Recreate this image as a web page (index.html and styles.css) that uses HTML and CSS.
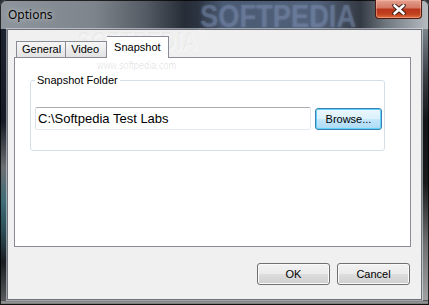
FILE: index.html
```html
<!DOCTYPE html>
<html lang="en">
<head>
  <meta charset="UTF-8">
  <title>Options</title>
  <link rel="stylesheet" href="styles.css">
</head>
<body>
  <div class="window">
    <div class="titlebar">
      <span class="title">Options</span>
      <div class="close-btn">
        <svg width="14" height="11" viewBox="0 0 14 11">
          <path d="M2.5 1.5 L11.5 9.5 M11.5 1.5 L2.5 9.5" stroke="#3a1a14" stroke-width="4.4" stroke-linecap="round"/>
          <path d="M2.5 1.5 L11.5 9.5 M11.5 1.5 L2.5 9.5" stroke="#ffffff" stroke-width="2.6" stroke-linecap="round"/>
        </svg>
      </div>
    </div>

    <div class="client">
      <div class="tabs">
        <div class="tab">General</div>
        <div class="tab">Video</div>
        <div class="tab active">Snapshot</div>
      </div>

      <div class="panel">
        <fieldset class="group">
          <legend>Snapshot Folder</legend>
          <div class="row">
            <input class="path" type="text" value="C:\Softpedia Test Labs">
            <button class="btn focused">Browse...</button>
          </div>
        </fieldset>
      </div>

      <div class="actions">
        <button class="btn">OK</button>
        <button class="btn">Cancel</button>
      </div>
    </div>

    <!-- watermarks lie over the dialog -->
    <div class="wm wm-title">SOFTPEDIA</div>
    <div class="wm wm-client">SOFTPEDIA<span class="tm">™</span></div>
    <div class="wm wm-url">www.softpedia.com</div>
  </div>
</body>
</html>
```

FILE: styles.css
```css
body {
  margin: 0;
  padding: 0;
  background-color: #2a2e36;
  font-family: "Liberation Sans", Arial, sans-serif;
  font-size: 11px;
  overflow: hidden;
}
.window {
  position: relative;
  width: 429px;
  height: 305px;
  box-sizing: border-box;
  padding: 0 7px 5px 7px;
  display: flex;
  flex-direction: column;
  border-radius: 6px 6px 0 0;
  overflow: hidden;
  box-shadow: inset 0 0 0 1px rgba(0, 0, 0, 0.75);
  background:
    linear-gradient(to bottom, #3e3f41, #9a9c9e 40%, #7c7e80 70%, #2c2d2e) left bottom / 100% 5px no-repeat,
    linear-gradient(to bottom, transparent 0, transparent 29px, #1e2331 29px, #161a24 40%, #6c6f73 55%, #3f6d77 66%, #2b4c55 76%, #1a1d22 86%, #5f6163 100%) left top / 7px 100% no-repeat,
    linear-gradient(to bottom, transparent 0, transparent 29px, #7c848c 29px, #3a3f46 25%, #121418 40%, #1a1a1c 60%, #6f7173 80%, #a2a4a6 100%) right top / 7px 100% no-repeat,
    linear-gradient(to right, #8e959c 0%, #7d848b 22%, #555b64 34%, #272d37 43%, #2b3341 46%, #4b5a73 52%, #52617a 74%, #343a44 84%, #6f777f 90%, #b8bdc2 100%);
}
.titlebar {
  height: 29px;
  display: flex;
  align-items: center;
}
.title {
  padding-left: 1px;
  font-family: "Noto Sans", "Liberation Sans", sans-serif;
  font-size: 12px;
  color: #000;
  text-shadow: 0 0 6px rgba(255, 255, 255, 0.55), 0 0 2px rgba(255, 255, 255, 0.4);
}
.close-btn {
  align-self: flex-start;
  margin-left: auto;
  width: 47px;
  height: 19px;
  box-sizing: border-box;
  border: 1px solid #4a1c14;
  border-top: none;
  border-radius: 0 0 4px 4px;
  background: linear-gradient(to bottom, #e6a190 0%, #d47a66 42%, #b9361c 52%, #c1401f 78%, #e0703d 100%);
  box-shadow: inset 0 0 0 1px rgba(255, 200, 180, 0.45);
  display: flex;
  align-items: center;
  justify-content: center;
}
.client {
  flex: 1;
  display: flex;
  flex-direction: column;
  background-color: #f0f0f0;
  border: 1px solid #6f747c;
  box-shadow: 0 0 0 1px rgba(230, 232, 235, 0.55);
  padding: 6px 10px 0 6px;
}
.tabs {
  position: relative;
  z-index: 1;
  display: flex;
  align-items: flex-end;
  height: 22px;
  margin-bottom: -1px;
  padding-left: 2px;
}
.tab {
  height: 16px;
  line-height: 15px;
  margin-bottom: 1px;
  padding: 0 4px 0 5px;
  box-sizing: border-box;
  border: 1px solid #898c95;
  border-bottom: none;
  border-right: none;
  background: linear-gradient(to bottom, #f6f6f6, #e2e2e2);
  color: #000;
}
.tab:nth-child(2) {
  border-right: 1px solid #898c95;
  padding: 0 7px 0 5px;
}
.tab.active {
  height: 22px;
  margin-bottom: 0;
  padding: 3px 7px 0 7px;
  line-height: 14px;
  background: #fff;
  border-left: none;
  border-right: 1px solid #898c95;
  border-top: 1px solid #898c95;
}
.panel {
  height: 190px;
  box-sizing: border-box;
  background-color: #fff;
  border: 1px solid #898c95;
  padding-top: 16px;
}
.group {
  margin: 0 25px 0 15px;
  padding: 20px 2px 20px 4px;
  border: 1px solid #d5dfe5;
  border-radius: 3px;
}
.group legend {
  padding: 0 2px;
  line-height: 13px;
  color: #000;
}
.row {
  display: flex;
  align-items: flex-start;
  gap: 4px;
}
.path {
  width: 276px;
  height: 23px;
  box-sizing: border-box;
  margin: 0;
  padding: 0 2px;
  border: 1px solid #e3e9ef;
  border-top-color: #abadb3;
  border-left-color: #dbdfe6;
  border-radius: 2px;
  font-family: "Liberation Sans", Arial, sans-serif;
  font-size: 13px;
  color: #000;
  outline: none;
}
.btn {
  height: 22px;
  box-sizing: border-box;
  margin: 0;
  padding: 0;
  border: 1px solid #707070;
  border-radius: 3px;
  background: linear-gradient(to bottom, #f2f2f2 0%, #ebebeb 48%, #dddddd 52%, #cfcfcf 100%);
  box-shadow: inset 0 0 0 1px #fbfbfb;
  font-family: "Liberation Sans", Arial, sans-serif;
  font-size: 11px;
  color: #000;
}
.btn.focused {
  width: 67px;
  height: 22px;
  margin-top: 1px;
  border-color: #3c7fb1;
  background: linear-gradient(to bottom, #ebf7fe 0%, #dbf1fc 48%, #c3e7fb 52%, #abdaf4 100%);
  box-shadow: inset 0 0 0 1px #5fd1f8;
}
.actions {
  display: flex;
  justify-content: flex-end;
  gap: 7px;
  margin-top: 16px;
  padding-right: 1px;
}
.actions .btn {
  width: 73px;
}
.wm {
  position: absolute;
  font-family: "Liberation Sans", Arial, sans-serif;
  font-weight: bold;
  white-space: nowrap;
  pointer-events: none;
  transform-origin: left top;
}
.wm-title {
  left: 200px;
  top: -1px;
  font-size: 31px;
  transform: scaleX(0.88);
  color: rgba(125, 145, 180, 0.32);
  text-shadow: 0 0 3px rgba(125, 145, 180, 0.4);
}
.wm-client {
  left: 77px;
  top: 27px;
  font-size: 25px;
  transform: scaleX(0.84);
  color: rgba(0, 0, 0, 0.05);
  text-shadow: 1px 1px 0 rgba(255, 255, 255, 0.5);
}
.wm-client .tm {
  font-size: 9px;
  vertical-align: top;
  font-weight: normal;
}
.wm-url {
  left: 97px;
  top: 60px;
  font-size: 10px;
  font-weight: normal;
  transform: scaleX(0.92);
  color: rgba(0, 0, 0, 0.12);
}
```
